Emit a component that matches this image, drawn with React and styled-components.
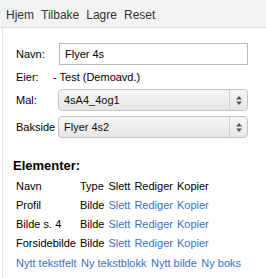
import React from 'react';
import styled, { createGlobalStyle } from 'styled-components';

const GlobalStyle = createGlobalStyle`
    body {
        margin: 0;
        background: #fff;
        font-family: "Liberation Sans", Arial, sans-serif;
        font-size: 11px;
        color: #000;
    }
`;

const elements = [
    { name: 'Profil', type: 'Bilde' },
    { name: 'Bilde s. 4', type: 'Bilde' },
    { name: 'Forsidebilde', type: 'Bilde' },
];

const newLinks = ['Nytt tekstfelt', 'Ny tekstblokk', 'Nytt bilde', 'Ny boks'];

export default function App() {
    return (
        <>
            <GlobalStyle />
            <Page>
                <NavBar>
                    <NavLink>Hjem</NavLink>
                    <NavLink>Tilbake</NavLink>
                    <NavLink>Lagre</NavLink>
                    <NavLink>Reset</NavLink>
                </NavBar>
                <Panel>
                    <Form>
                        <Label>Navn:</Label>
                        <TextInput defaultValue="Flyer 4s" />
                        <Label>Eier:</Label>
                        <Value>- Test (Demoavd.)</Value>
                        <Label>Mal:</Label>
                        <SelectBox>
                            <Select defaultValue="4sA4_4og1">
                                <option>4sA4_4og1</option>
                            </Select>
                            <Arrows><ArrowIcon /></Arrows>
                        </SelectBox>
                        <Label>Bakside</Label>
                        <SelectBox>
                            <Select defaultValue="Flyer 4s2">
                                <option>Flyer 4s2</option>
                            </Select>
                            <Arrows><ArrowIcon /></Arrows>
                        </SelectBox>
                    </Form>

                    <Heading>Elementer:</Heading>
                    <Table>
                        <tbody>
                            <tr>
                                <Cell>Navn</Cell>
                                <Cell>Type</Cell>
                                <Cell>Slett</Cell>
                                <Cell>Rediger</Cell>
                                <Cell>Kopier</Cell>
                            </tr>
                            {elements.map(el => (
                                <tr key={el.name}>
                                    <Cell>{el.name}</Cell>
                                    <Cell>{el.type}</Cell>
                                    <Cell><Link>Slett</Link></Cell>
                                    <Cell><Link>Rediger</Link></Cell>
                                    <Cell><Link>Kopier</Link></Cell>
                                </tr>
                            ))}
                        </tbody>
                    </Table>
                    <LinkRow>
                        {newLinks.map(l => <Link key={l}>{l}</Link>)}
                    </LinkRow>
                </Panel>
            </Page>
        </>
    );
}

const ArrowIcon = () => (
    <svg width="6" height="9" viewBox="0 0 6 9">
        <path d="M3 0 L6 3.5 H0 Z" fill="#555" />
        <path d="M3 9 L6 5.5 H0 Z" fill="#555" />
    </svg>
);

const Page = styled.div`
    width: 266px;
    min-height: 278px;
`;

const NavBar = styled.div`
    display: flex;
    gap: 7px;
    height: 28px;
    box-sizing: border-box;
    padding: 8px 0 0 6px;
    background: #f3f3f3;
    border-bottom: 1px solid #dcdcdc;
    font-size: 12px;
    line-height: 14px;
`;

const NavLink = styled.span`
    color: #333;
    cursor: pointer;
`;

const Panel = styled.div`
    margin-left: 2px;
    border-left: 1px solid #e2e2e2;
    padding: 15px 0 12px 10px;
    min-height: 235px;
`;

const Form = styled.div`
    display: grid;
    grid-template-columns: 37px 195px;
    align-items: center;
    row-gap: 5px;
    padding-left: 3px;
`;

const Label = styled.span`
    line-height: 14px;
`;

const Value = styled.span`
    line-height: 14px;
`;

const TextInput = styled.input.attrs({ type: 'text' })`
    margin-left: 6px;
    height: 22px;
    box-sizing: border-box;
    padding: 0 5px;
    font: inherit;
    border: 1px solid #b9b9b9;
    border-radius: 0;
    outline: none;
`;

const SelectBox = styled.div`
    display: flex;
    margin-left: 5px;
    height: 22px;
    box-sizing: border-box;
    border: 1px solid #c4c4c4;
    border-radius: 4px;
    background: linear-gradient(#f6f6f6, #e6e6e6);
    overflow: hidden;
`;

const Select = styled.select`
    flex: 1;
    appearance: none;
    border: 0;
    background: transparent;
    padding: 0 5px;
    font: inherit;
    color: #111;
    outline: none;
`;

const Arrows = styled.span`
    display: flex;
    align-items: center;
    justify-content: center;
    width: 17px;
    border-left: 1px solid #cfcfcf;
`;

const Heading = styled.h2`
    margin: 20px 0 0;
    font-size: 13px;
    line-height: 15px;
    font-weight: bold;
`;

const Table = styled.table`
    margin-top: 3px;
    border-spacing: 2px;
`;

const Cell = styled.td`
    padding: 2px 1px;
    line-height: 13px;
    white-space: nowrap;
`;

const Link = styled.a`
    color: #3a6fc6;
    cursor: pointer;
`;

const LinkRow = styled.div`
    display: flex;
    gap: 4.5px;
    margin-top: 3px;
    padding-left: 3px;
    line-height: 13px;
    white-space: nowrap;
`;
